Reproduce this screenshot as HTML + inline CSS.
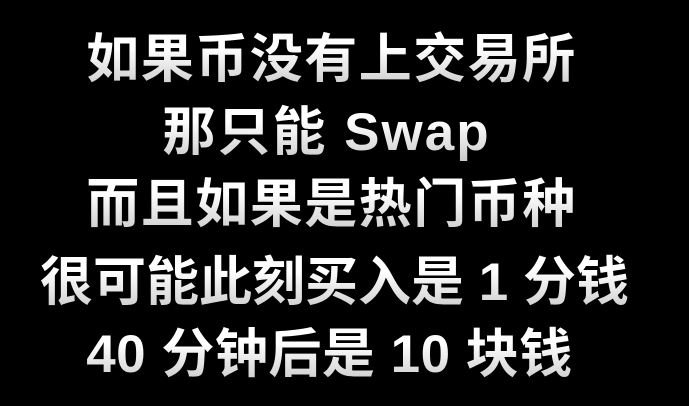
<!DOCTYPE html>
<html><head><meta charset="utf-8"><style>
html,body{margin:0;padding:0;background:#000;width:689px;height:406px;overflow:hidden}
.l{position:absolute;left:0;width:689px;text-align:center;font-family:"Liberation Sans","Noto Sans CJK SC",sans-serif;font-weight:bold;font-size:53px;line-height:60px;white-space:nowrap;
background:linear-gradient(#ffffff 30%,#c8c8c8 100%);-webkit-background-clip:text;background-clip:text;color:transparent}
</style></head><body>
<div class="l" style="top:30px;left:-13px;letter-spacing:1.5px">如果币没有上交易所</div>
<div class="l" style="top:103px;left:-18px;letter-spacing:2px">那只能 Swap</div>
<div class="l" style="top:175px;left:-13px;letter-spacing:1.5px">而且如果是热门币种</div>
<div class="l" style="top:253px;left:-10px">很可能此刻买入是 1 分钱</div>
<div class="l" style="top:325px;left:-15px;letter-spacing:0.5px">40 分钟后是 10 块钱</div>
</body></html>
